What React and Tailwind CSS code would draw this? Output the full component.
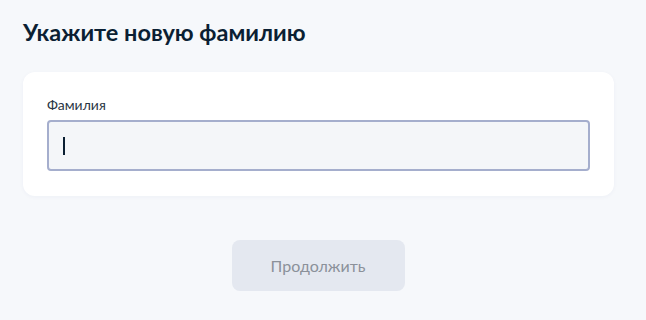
export default function App() {
  return (
    <div className="min-h-[320px] w-[646px] bg-[#f6f8fb] font-['Lato',sans-serif] pl-[23px] pt-[18px]">
      <h1 className="text-[23.5px] leading-[28px] font-bold text-[#0b1f33]">Укажите новую фамилию</h1>
      <div className="mt-[26px] w-[591px] rounded-[12px] bg-white px-[24px] pt-[23px] pb-[25px] shadow-[0_1px_4px_rgba(0,40,120,0.04)]">
        <label className="block text-[14px] leading-[19px] text-[#2a3645]">Фамилия</label>
        <div className="mt-[6px] flex h-[51px] w-[543px] items-center rounded-[4px] border-2 border-[#a5aecd] bg-[#f4f6f9] pl-[14px]">
          <span className="block h-[18px] w-[1.5px] bg-[#0b1f33]" />
        </div>
      </div>
      <div className="mt-[44px] flex w-[591px] justify-center">
        <button className="ml-[-1px] h-[51px] w-[173px] rounded-[8px] bg-[#e4e8f0] text-[16px] text-[#8b919a]">Продолжить</button>
      </div>
    </div>
  );
}
